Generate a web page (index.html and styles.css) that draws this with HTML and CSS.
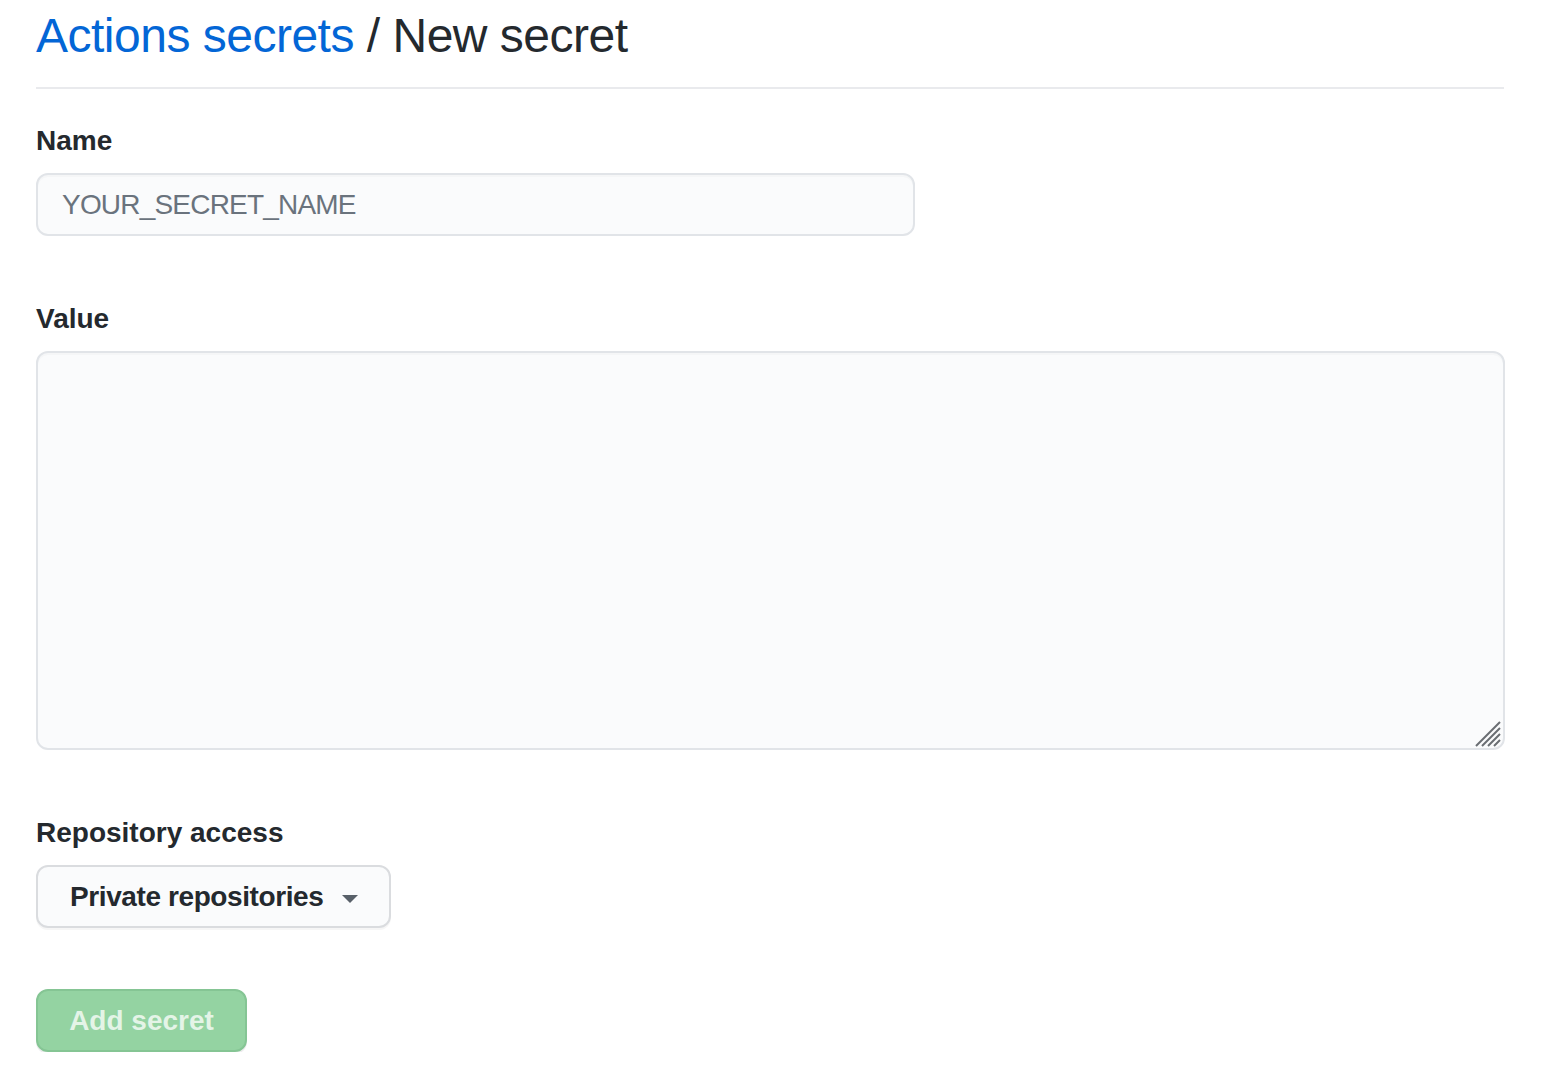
FILE: index.html
```
<!DOCTYPE html>
<html lang="en">
<head>
    <meta charset="UTF-8">
    <meta name="viewport" content="width=device-width, initial-scale=1.0">
    <title>New secret</title>
    <link rel="stylesheet" href="styles.css">
</head>
<body>
    <div class="page">
        <div class="subhead">
            <h2 class="subhead-heading"><a href="#">Actions secrets</a> / New secret</h2>
        </div>

        <form class="secret-form">
            <div class="form-group">
                <label for="secretName">Name</label>
                <input type="text" id="secretName" class="form-control name-input" placeholder="YOUR_SECRET_NAME">
            </div>

            <div class="form-group">
                <label for="secretValue">Value</label>
                <div class="textarea-wrap">
                    <textarea id="secretValue" class="form-control value-input"></textarea>
                    <svg class="resize-grip" width="26" height="26" viewBox="0 0 26 26">
                        <path d="M1 25 L25 1 M7 25 L25 7 M13 25 L25 13 M19 25 L25 19" stroke="#6a6e73" stroke-width="2" fill="none"/>
                    </svg>
                </div>
            </div>

            <div class="form-group access-group">
                <label>Repository access</label>
                <button type="button" class="btn select-btn">
                    <span class="select-text">Private repositories</span>
                    <span class="caret"></span>
                </button>
            </div>

            <button type="submit" class="btn btn-primary" disabled>Add secret</button>
        </form>
    </div>
</body>
</html>
```
FILE: styles.css
```
body {
    margin: 0;
    font-family: "Liberation Sans", Arial, sans-serif;
    color: #24292e;
    background: #fff;
}
.page {
    width: 1468px;
    padding: 0 36px;
}
.subhead {
    border-bottom: 2px solid #e9eaed;
    padding-bottom: 21px;
}
.subhead-heading {
    margin: 0;
    padding-top: 6px;
    font-size: 48px;
    font-weight: 400;
    line-height: 60px;
    letter-spacing: -0.5px;
}
.subhead-heading a {
    color: #0366d6;
    text-decoration: none;
}
.secret-form {
    padding-top: 34px;
}
.form-group {
    margin-bottom: 65px;
}
.access-group {
    margin-bottom: 61px;
}
.form-group label {
    display: block;
    font-size: 28px;
    font-weight: 700;
    line-height: 36px;
    margin-bottom: 14px;
}
.form-control {
    box-sizing: border-box;
    font-family: inherit;
    font-size: 28px;
    color: #24292e;
    background: #fafbfc;
    border: 2px solid #e1e4e8;
    border-radius: 12px;
    box-shadow: inset 0 2px 0 rgba(225, 228, 232, 0.2);
    outline: none;
}
.name-input {
    width: 879px;
    height: 63px;
    padding: 0 24px;
}
.name-input::placeholder {
    color: #6a737d;
    letter-spacing: -0.8px;
}
.textarea-wrap {
    position: relative;
    width: 1469px;
}
.value-input {
    display: block;
    width: 1469px;
    height: 399px;
    padding: 16px 24px;
    resize: none;
}
.resize-grip {
    position: absolute;
    right: 4px;
    bottom: 3px;
    pointer-events: none;
}
.btn {
    box-sizing: border-box;
    display: inline-flex;
    align-items: center;
    height: 63px;
    padding: 0 32px;
    font-family: inherit;
    font-size: 28px;
    font-weight: 700;
    white-space: nowrap;
    border-radius: 12px;
    cursor: pointer;
}
.select-btn {
    width: 355px;
    padding: 0 31px 0 32px;
    justify-content: space-between;
    color: #24292e;
    background: #fafbfc;
    border: 2px solid #dadcdf;
    box-shadow: 0 2px 0 rgba(27, 31, 35, 0.04);
}
.select-text {
    letter-spacing: -0.4px;
}
.caret {
    display: inline-block;
    margin-top: 4px;
    border-top: 8px solid #586069;
    border-left: 8px solid transparent;
    border-right: 8px solid transparent;
}
.btn-primary {
    width: 211px;
    justify-content: center;
    padding: 0;
    color: rgba(255, 255, 255, 0.75);
    background: #94d3a2;
    border: 2px solid #85c594;
    box-shadow: 0 2px 0 rgba(27, 31, 35, 0.08);
}
```
